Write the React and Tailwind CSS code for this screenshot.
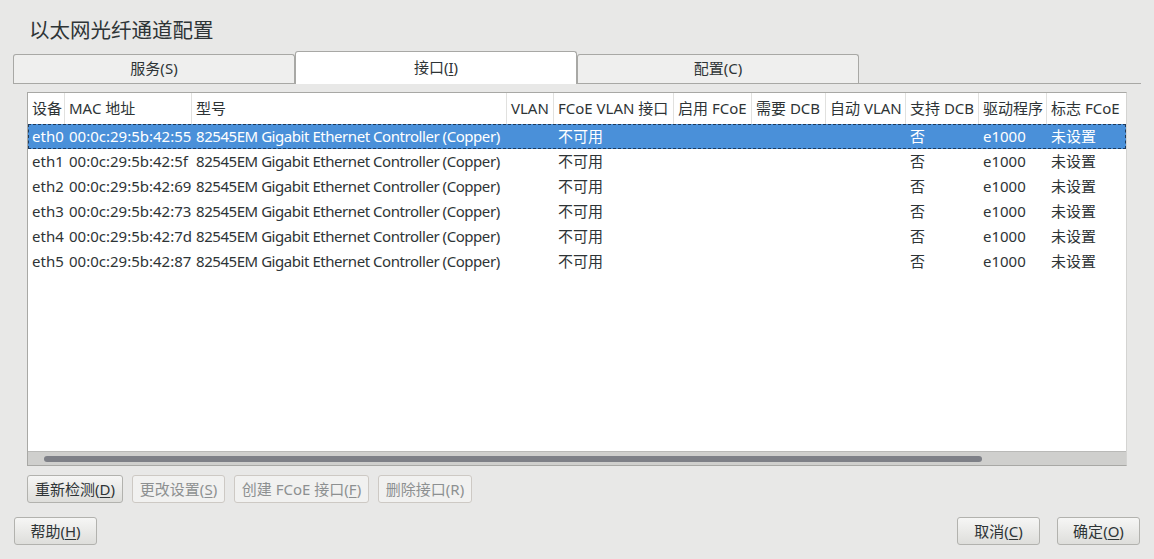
import React from 'react'

const FONT = { fontFamily: '"Noto Sans", "Noto Sans CJK SC", sans-serif' }

const columns = [
  { label: '设备', w: 'w-[37px]' },
  { label: 'MAC 地址', w: 'w-[127px]' },
  { label: '型号', w: 'w-[315px]' },
  { label: 'VLAN', w: 'w-[47px]' },
  { label: 'FCoE VLAN 接口', w: 'w-[120px]' },
  { label: '启用 FCoE', w: 'w-[78px]' },
  { label: '需要 DCB', w: 'w-[74px]' },
  { label: '自动 VLAN', w: 'w-[80px]' },
  { label: '支持 DCB', w: 'w-[73px]' },
  { label: '驱动程序', w: 'w-[68px]' },
  { label: '标志 FCoE', w: 'w-[78px]' },
]

const rows = [
  ['eth0', '00:0c:29:5b:42:55'],
  ['eth1', '00:0c:29:5b:42:5f'],
  ['eth2', '00:0c:29:5b:42:69'],
  ['eth3', '00:0c:29:5b:42:73'],
  ['eth4', '00:0c:29:5b:42:7d'],
  ['eth5', '00:0c:29:5b:42:87'],
].map(([dev, mac]) => [
  dev, mac, '82545EM Gigabit Ethernet Controller (Copper)', '', '不可用', '', '', '', '否', 'e1000', '未设置',
])

function Mnemonic({ text, ch }) {
  return (
    <span>
      {text}(<span className="underline underline-offset-2">{ch}</span>)
    </span>
  )
}

function Button({ children, disabled, className = '' }) {
  return (
    <button
      className={`h-[28px] px-[6px] rounded-[3px] border text-[15px] leading-none whitespace-nowrap flex items-center justify-center
        ${disabled
          ? 'border-[#cdc9c4] bg-[#f1f1f0] text-[#8d9091]'
          : 'border-[#b2b2ae] bg-gradient-to-b from-[#f6f6f5] to-[#dededb] text-[#2e3436]'} ${className}`}
    >
      {children}
    </button>
  )
}

function Tab({ label, ch, active }) {
  return (
    <div
      className={`w-[282px] flex items-center justify-center text-[15px] text-[#2e3436] border border-b-0 rounded-t-[3px]
        ${active
          ? 'h-[33px] bg-white border-[#a8a8a5] -mb-px relative z-10'
          : 'h-[29px] bg-[#efefee] border-[#a8a8a5]'}`}
    >
      <span className="-mt-[1px]">{label}(<span className={ch === 'I' ? 'underline underline-offset-2' : ''}>{ch}</span>)</span>
    </div>
  )
}

export default function App() {
  return (
    <div className="w-[1154px] h-[559px] bg-[#e8e8e7] text-[#2e3436] overflow-hidden flex flex-col" style={FONT}>

      {/* ── Title ── */}
      <div className="h-[51px] pl-[29px] pt-[15px] text-[20.5px] leading-[30px]">以太网光纤通道配置</div>

      {/* ── Tabs ── */}
      <div className="ml-[13px] w-[1128px] h-[33px] flex items-end border-b border-[#a8a8a5]">
        <Tab label="服务" ch="S" />
        <Tab label="接口" ch="I" active />
        <Tab label="配置" ch="C" />
      </div>

      {/* ── Table ── */}
      <div className="ml-[27px] mt-[8px] w-[1100px] h-[374px] bg-white border border-[#a8a8a5] border-r-[#d4d4d2] flex flex-col">
        <div className="flex-1 min-h-0 overflow-hidden text-[15px]">
          {/* header */}
          <div className="flex h-[31px]">
            {columns.map((c, i) => (
              <div
                key={c.label}
                className={`${c.w} flex-shrink-0 flex items-center pl-[4px] whitespace-nowrap overflow-hidden
                  ${i < columns.length - 1 ? 'border-r border-[#e1e1df]' : ''}`}
              >
                {c.label}
              </div>
            ))}
          </div>

          {/* rows */}
          {rows.map((r, ri) => (
            <div
              key={ri}
              className={`flex h-[25px] ${ri === 0
                ? 'bg-[#4a90d9] text-white border border-dashed border-[#1e3a5c]'
                : ''}`}
            >
              {r.map((cell, ci) => (
                <div
                  key={ci}
                  className={`${columns[ci].w} flex-shrink-0 flex items-center pl-[4px] whitespace-nowrap overflow-hidden
                    ${ci === 2 ? 'tracking-[-0.45px]' : ''}
                    ${ri === 0 && ci === 0 ? '-ml-px' : ''}`}
                >
                  {cell}
                </div>
              ))}
            </div>
          ))}
        </div>

        {/* horizontal scrollbar */}
        <div className="h-[14px] bg-[#cfcfcd] border-t border-[#b9b9b7] flex items-center pl-[16px]">
          <div className="w-[938px] h-[6px] rounded-full bg-[#7e8087]" />
        </div>
      </div>

      {/* ── Action buttons ── */}
      <div className="ml-[27px] mt-[9px] flex gap-[9px]">
        <Button className="w-[96px]"><Mnemonic text="重新检测" ch="D" /></Button>
        <Button disabled className="w-[93px]"><Mnemonic text="更改设置" ch="S" /></Button>
        <Button disabled className="w-[135px]"><Mnemonic text="创建 FCoE 接口" ch="F" /></Button>
        <Button disabled className="w-[94px]"><span>删除接口(R)</span></Button>
      </div>

      {/* ── Dialog buttons ── */}
      <div className="mt-[14px] px-[14px] flex">
        <Button className="w-[83px]"><Mnemonic text="帮助" ch="H" /></Button>
        <div className="flex-1" />
        <Button className="w-[83px]"><Mnemonic text="取消" ch="C" /></Button>
        <Button className="w-[83px] ml-[17px]"><Mnemonic text="确定" ch="O" /></Button>
      </div>
    </div>
  )
}
